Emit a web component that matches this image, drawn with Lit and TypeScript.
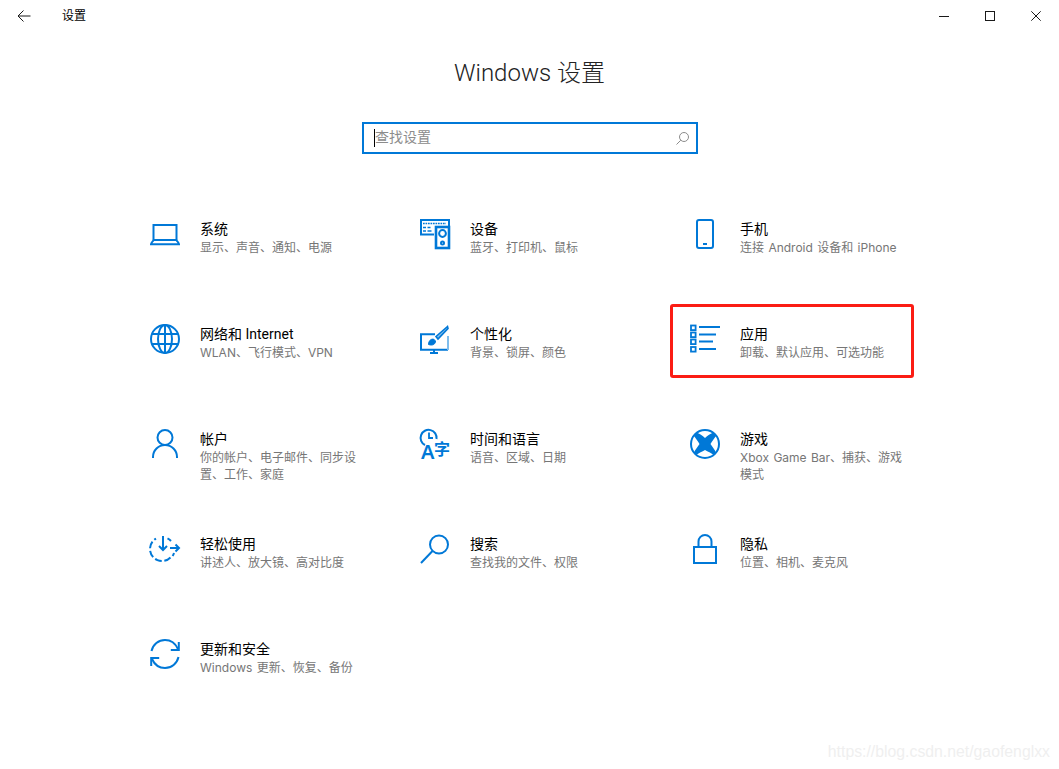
import { LitElement, html, css, svg } from "lit";
import { customElement } from "lit/decorators.js";

const ic = (body: unknown) => html`<svg class="icon" viewBox="0 0 30 30" width="30" height="30">${body}</svg>`;

const icons = {
  laptop: svg`<path d="M3.500 21V6h23v15"/><path d="M1 25.200c0-1 2.500-4.200 3-4.200h22c.5 0 3 3.200 3 4.200H1z"/>`,
  devices: svg`<path d="M14 15.500H1V1h28v6"/><rect x="16" y="8" width="13" height="21" stroke-width="2.600"/>
    <circle cx="22.500" cy="14.500" r="3.400"/><circle cx="22.500" cy="24" r="1.500"/>
    <path stroke-width="1.600" stroke-dasharray="1.700 .8" d="M3 4.500h23"/><path stroke-width="1.600" d="M3 8.500h3M7.500 8.500h3M3 12h3M7.500 12h4"/>`,
  phone: svg`<rect x="7" y="1" width="16" height="28" rx="2"/><path d="M13 25h4"/>`,
  globe: svg`<circle cx="15" cy="15" r="14"/><ellipse cx="15" cy="15" rx="7" ry="14"/><path d="M2 10h26M2 20h26M15 1v28"/>`,
  paint: svg`<path d="M15 10.300H1v15.400h27"/><path d="M28 12v14" stroke="#7fbdec"/><path d="M14 26v3M10 29h8"/>
    <path d="M27.500 2.500 16 12.500l2 2.500L28 4.500z" fill="#7fbdec" stroke-width="1.600"/><path d="M8.500 20.500c0-3.500 2-5.500 5-5.500l2 2c0 3-2.500 5-7 3.500z" fill="#0078d7" stroke-width="1"/>`,
  apps: svg`<g stroke-width="1.800"><rect x="1" y="1.500" width="4.600" height="4.600"/><rect x="1" y="8.500" width="4.600" height="4.600"/><rect x="1" y="15.500" width="4.600" height="4.600"/><rect x="1" y="23" width="4.600" height="4.600"/></g>
    <path d="M9 3h21M9 10.500h17M9 17.500h14M9 25h17"/>`,
  person: svg`<circle cx="15" cy="8.500" r="7.500"/><path d="M3 29v-1a12 12 0 0 1 24 0v1"/>`,
  time: svg`<path d="M5 16a8 8 0 1 1 11.500-6"/><path d="M9 3.500V9h4" stroke-width="1.800"/>
    <text x="1" y="30" class="glyph a">A</text><text x="14" y="26" class="glyph">字</text>`,
  xbox: svg`<circle cx="15" cy="15" r="14"/><path class="solid" d="M6.500 3.500C9.500 4.500 12.500 6.500 15 9C17.500 6.500 20.500 4.500 23.500 3.500L26.500 6.500C24 9.500 22 12.500 20.500 15C22.500 18 25 21 26 23.500L23.500 26C21 24 18 22.500 15 21C12 22.500 9 24 6.500 26L4 23.500C5 21 7.500 18 9.500 15C8 12.500 6 9.500 3.500 6.500Z"/>`,
  ease: svg`<path d="M20.500 23.500a12 12 0 0 1-20.500-8.500a12 12 0 0 1 6-10.400" stroke-dasharray="7 2.600"/><path d="M17.500 4.300a12 12 0 0 1 3.500 2.700"/><path d="M24 19a12 12 0 0 1-1.400 3"/>
    <path d="M13 2v14M9 12l4 4 4-4M20 14h9M25.500 10.500 29 14l-3.500 3.500"/>`,
  search: svg`<circle cx="19" cy="10.500" r="9"/><path d="M12.500 17 1 29"/>`,
  lock: svg`<rect x="4" y="13" width="22" height="16"/><path d="M8.500 13V7.500a6.500 6.500 0 0 1 13 0V13"/>`,
  update: svg`<path d="M1.500 12C3 5.500 8.500 1 15 1c6 0 10.500 3.500 13 9"/><path d="M28.800 3v8h-8"/>
    <path d="M28.500 18c-1.500 6.500-7 11-13.500 11-6 0-10.500-3.500-13-9"/><path d="M1.200 27v-8h8"/>`,
};

const items: [unknown, string, string][] = [
  [icons.laptop, "系统", "显示、声音、通知、电源"],
  [icons.devices, "设备", "蓝牙、打印机、鼠标"],
  [icons.phone, "手机", "连接 Android 设备和 iPhone"],
  [icons.globe, "网络和 Internet", "WLAN、飞行模式、VPN"],
  [icons.paint, "个性化", "背景、锁屏、颜色"],
  [icons.apps, "应用", "卸载、默认应用、可选功能"],
  [icons.person, "帐户", "你的帐户、电子邮件、同步设置、工作、家庭"],
  [icons.time, "时间和语言", "语音、区域、日期"],
  [icons.xbox, "游戏", "Xbox Game Bar、捕获、游戏模式"],
  [icons.ease, "轻松使用", "讲述人、放大镜、高对比度"],
  [icons.search, "搜索", "查找我的文件、权限"],
  [icons.lock, "隐私", "位置、相机、麦克风"],
  [icons.update, "更新和安全", "Windows 更新、恢复、备份"],
];

@customElement("app-root")
export class AppRoot extends LitElement {
  static styles = css`
    :host {
      display: block;
      position: relative;
      width: 1059px;
      height: 769px;
      overflow: hidden;
      background: #fff;
      color: #000;
      font-family: Roboto, "Noto Sans CJK SC", sans-serif;
    }
    .bar { display: flex; align-items: center; height: 32px; }
    .back { display: flex; width: 62px; padding-left: 17px; box-sizing: border-box; }
    .bar-title { flex: 1; font-size: 12px; line-height: 16px; }
    .controls { display: flex; }
    .ctl { display: flex; justify-content: center; width: 46px; }
    .bar svg { fill: none; stroke: #1a1a1a; stroke-width: 1; }
    h1 {
      margin: 24px 0 0;
      height: 34px;
      font-size: 24px;
      line-height: 34px;
      font-weight: 300;
      text-align: center;
      color: #222;
    }
    .search {
      display: flex;
      align-items: center;
      box-sizing: border-box;
      width: 336px;
      height: 32px;
      margin: 32px 0 0 362px;
      padding: 0 7px 0 10px;
      border: 2px solid #0078d7;
    }
    .caret { width: 1px; height: 18px; background: #000; }
    .ph { flex: 1; font-size: 14px; line-height: 18px; color: #8c8c8c; margin-top: -2px; }
    .search svg { fill: none; stroke: #8c8c8c; stroke-width: 1; }
    .grid {
      display: grid;
      grid-template-columns: repeat(3, 270px);
      grid-auto-rows: 105px;
      margin: 65px 0 0 150px;
    }
    .item { display: flex; gap: 20px; align-items: flex-start; }
    .icon { flex: none; fill: none; stroke: #0078d7; stroke-width: 2; overflow: visible; }
    .solid { fill: #0078d7; stroke: none; }
    .glyph { fill: #0078d7; stroke: none; font-size: 16px; font-weight: 700; font-family: "Noto Sans CJK SC", sans-serif; }
    .glyph.a { font-family: "Noto Sans", sans-serif; font-size: 20px; font-weight: 600; }
    .text { width: 165px; }
    .t { font-size: 14px; line-height: 20px; color: #000; }
    .d { font-family: Inter, "Noto Sans CJK SC", sans-serif; font-size: 12px; line-height: 17px; color: #767676; word-spacing: 1px; }
    .mark {
      position: absolute;
      left: 670px;
      top: 304px;
      box-sizing: border-box;
      width: 244px;
      height: 74px;
      border: 3px solid #fb1c14;
      border-radius: 3px;
    }
    .wm {
      position: absolute;
      right: 9px;
      bottom: 7px;
      font-family: "Liberation Sans", sans-serif;
      font-size: 15.8px;
      line-height: 20px;
      color: #efefef;
    }
  `;

  render() {
    return html`
      <div class="bar">
        <div class="back">
          <svg width="14" height="12" viewBox="0 0 14 12"><path d="M13.500 6H1M6.500.5 1 6l5.500 5.500"/></svg>
        </div>
        <div class="bar-title">设置</div>
        <div class="controls">
          <div class="ctl"><svg width="10" height="10" viewBox="0 0 10 10"><path d="M0 5.500h10"/></svg></div>
          <div class="ctl"><svg width="10" height="10" viewBox="0 0 10 10"><rect x=".5" y=".5" width="9" height="9"/></svg></div>
          <div class="ctl"><svg width="10" height="10" viewBox="0 0 10 10"><path d="m.3.300 9.400 9.400M9.700.300.3 9.700"/></svg></div>
        </div>
      </div>
      <h1>Windows 设置</h1>
      <div class="search">
        <span class="caret"></span><span class="ph">查找设置</span>
        <svg width="13" height="13" viewBox="0 0 13 13"><circle cx="8" cy="5" r="4.500"/><path d="M4.800 8.200.5 12.500"/></svg>
      </div>
      <div class="grid">
        ${items.map(
          ([i, t, d]) => html`<div class="item">
            ${ic(i)}
            <div class="text"><div class="t">${t}</div><div class="d">${d}</div></div>
          </div>`
        )}
      </div>
      <div class="mark"></div>
      <div class="wm">https://blog.csdn.net/gaofenglxx</div>
    `;
  }
}
